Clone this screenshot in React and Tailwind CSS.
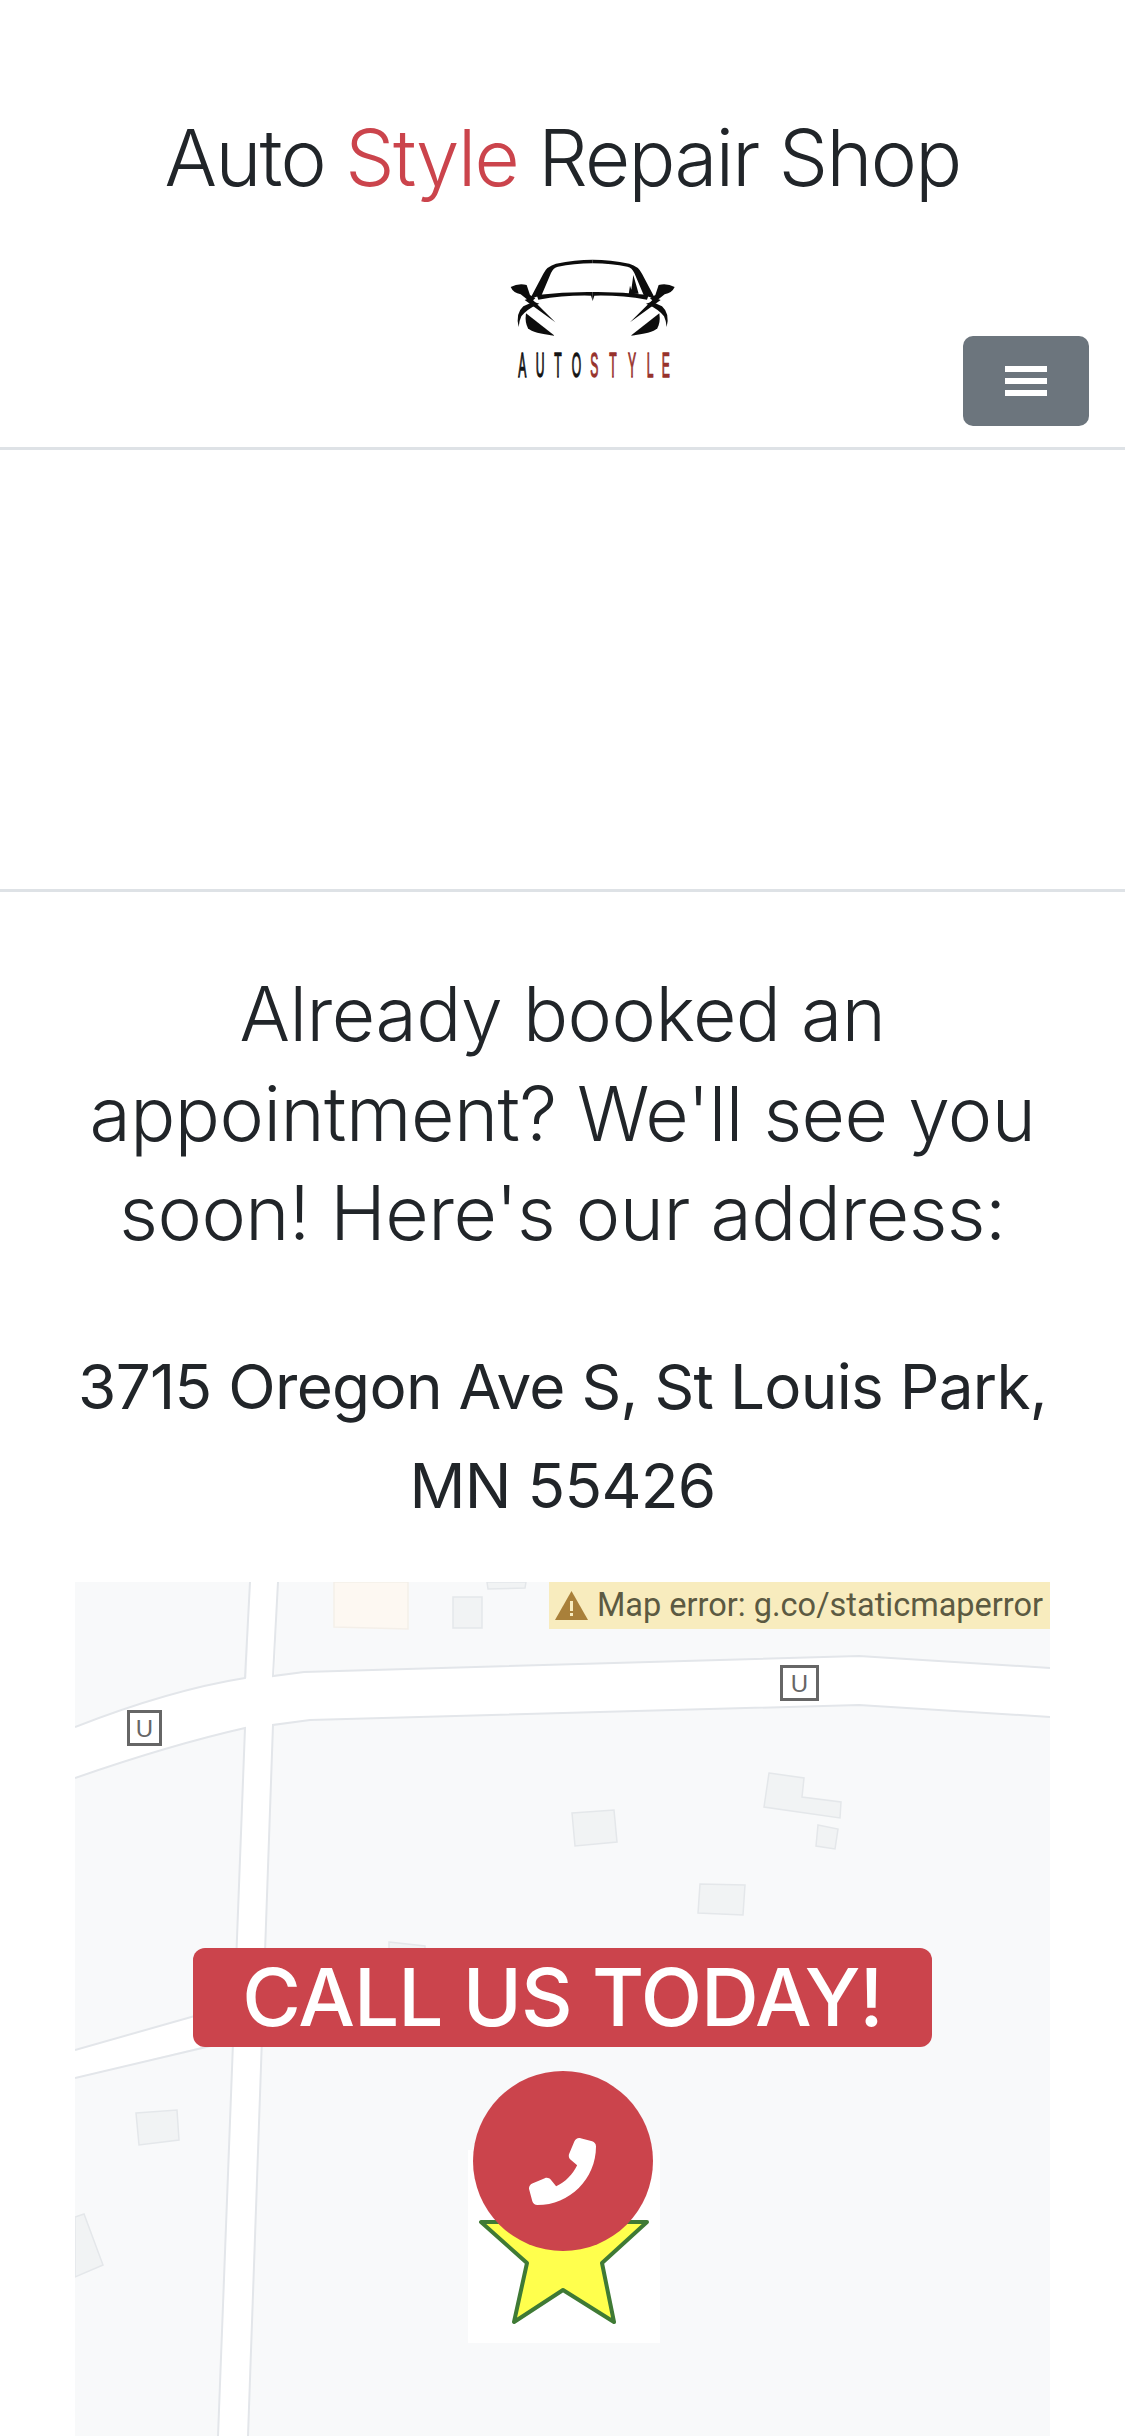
import { FaPhone } from "react-icons/fa6";

const CAR_SIDE = [
  // windshield pillar and half of the roof
  "M120 162 L160 86 Q170 64 198 56 Q255 44 308 44 L308 55 Q250 56 204 65 Q190 68 183 84 L155 150 Z",
  // belt line
  "M140 150 Q225 140 308 141 L308 168 L303 152 Q225 150 145 164 Z",
  // mirror
  "M62 126 Q85 114 110 120 L120 150 L136 160 L122 172 L92 148 Q70 144 62 126 Z",
  // crossing strokes
  "M104 165 L122 158 L196 232 L136 188 Z",
  "M130 170 L148 176 Q110 192 94 214 Q88 226 86 246 Q76 205 100 184 Z",
  // headlamp
  "M108 205 L194 272 Q130 266 114 250 Q104 232 108 205 Z",
];

const LETTERS = [
  ["A", 85, "#111"],
  ["U", 137, "#111"],
  ["T", 193, "#111"],
  ["O", 245, "#111"],
  ["S", 301, "#96302a"],
  ["T", 358, "#96302a"],
  ["Y", 414, "#96302a"],
  ["L", 470, "#96302a"],
  ["E", 515, "#96302a"],
];

function Logo() {
  return (
    <svg viewBox="0 0 600 450" className="w-[200px] h-[150px] shrink-0 opacity-[0.99]">
      {CAR_SIDE.map((d) => (
        <path key={d} d={d} fill="#0a0a0a" />
      ))}
      <g transform="translate(616 0) scale(-1 1)">
        {CAR_SIDE.map((d) => (
          <path key={d} d={d} fill="#0a0a0a" />
        ))}
      </g>
      <path d="M430 90 L446 146 L416 148 L420 122 L424 134 Z" fill="#0a0a0a" />
      {LETTERS.map(([c, x, fill], i) => (
        <text
          key={i}
          transform={`translate(${x} 396) scale(0.34 1)`}
          fontFamily="'Liberation Sans', sans-serif"
          fontSize="107"
          fill={fill}
          stroke={fill}
          strokeWidth="4"
        >
          {c}
        </text>
      ))}
    </svg>
  );
}

const BUILDINGS = [
  "M453 1597 L482 1597 L482 1628 L453 1628 Z",
  "M487 1582 L526 1582 L525 1588 L488 1589 Z",
  "M572 1813 L614 1810 L617 1842 L575 1846 Z",
  "M769 1773 L804 1778 L802 1797 L841 1802 L840 1818 L764 1807 Z",
  "M818 1825 L838 1829 L835 1849 L816 1846 Z",
  "M700 1884 L745 1885 L743 1915 L698 1913 Z",
  "M389 1942 L425 1946 L425 1960 L389 1960 Z",
  "M136 2113 L177 2110 L179 2140 L139 2145 Z",
  "M75 2217 L84 2214 L103 2265 L75 2277 Z",
];

function MapPicture() {
  return (
    <svg viewBox="75 1582 975 854" className="w-full h-full block">
      <rect x="75" y="1582" width="975" height="854" fill="#f8f9fa" />
      <path d="M334 1582 L408 1582 L408 1629 L334 1627 Z" fill="#fdf8f2" stroke="#f4efe9" strokeWidth="1.5" />
      {BUILDINGS.map((d) => (
        <path key={d} d={d} fill="#f1f3f4" stroke="#e4e7ea" strokeWidth="1.5" />
      ))}
      {/* roads */}
      <path d="M250 1582 L278 1582 L273 1725 L248 2436 L218 2436 L245 1728 Z" fill="#fff" />
      <path d="M75 1727 Q170 1690 245 1678 L273 1676 L304 1672 L859 1656 L1050 1668 L1050 1717 L859 1705 L310 1720 L273 1725 L245 1728 Q170 1745 75 1778 Z" fill="#fff" />
      <path d="M75 2050 L250 2000 L250 2035 L75 2078 Z" fill="#fff" />
      <g fill="none" stroke="#e3e6ea" strokeWidth="2">
        <path d="M250 1582 L245 1678 Q170 1690 75 1727" />
        <path d="M278 1582 L273 1676 L304 1672 L859 1656 L1050 1668" />
        <path d="M1050 1717 L859 1705 L310 1720 L273 1725 L248 2436" />
        <path d="M75 1778 Q170 1745 245 1728 L218 2436" />
        <path d="M75 2050 L230 2006" />
        <path d="M75 2078 L215 2045" />
      </g>
      {/* U signs */}
      <g fill="#fff" stroke="#666" strokeWidth="3">
        <rect x="128.5" y="1711.5" width="32" height="33" />
        <rect x="781.5" y="1666.5" width="36" height="33" />
      </g>
      <g fontFamily="'Liberation Sans', sans-serif" fontSize="24" fill="#666" textAnchor="middle">
        <text x="144.5" y="1737">U</text>
        <text x="799.5" y="1692">U</text>
      </g>
      {/* marker */}
      <rect x="468" y="2150" width="192" height="193" fill="#fff" />
      <path
        d="M563 2160 L600 2222 L647 2222 L602 2263 L614 2322 L563 2290 L514 2322 L527 2263 L481 2222 L527 2222 Z"
        fill="#ffff4d"
        stroke="#3f7a35"
        strokeWidth="4"
        strokeLinejoin="round"
      />
    </svg>
  );
}

export default function App() {
  return (
    <div className="relative h-[2436px] overflow-hidden bg-white text-[#212529] font-[Inter,sans-serif] font-light">
      <header className="pt-[109px] h-[450px] border-b-[3px] border-[#dee2e6]">
        <h1 className="text-center text-[78px] leading-[97px] tracking-[-1.7px]">
          Auto <span className="text-[#cb444c]">Style</span> Repair Shop
        </h1>
        <div className="flex justify-between pl-[490px] pr-[36px] mt-[39px]">
          <Logo />
          <button className="mt-[91px] w-[126px] h-[90px] rounded-[10px] bg-[#6c757d] flex flex-col items-center justify-center gap-[6px]">
            <span className="w-[42px] h-[6px] bg-white" />
            <span className="w-[42px] h-[6px] bg-white" />
            <span className="w-[42px] h-[6px] bg-white" />
          </button>
        </div>
      </header>

      <div className="h-[442px] border-b-[3px] border-[#dee2e6]" />

      <main className="px-[75px] text-center">
        <h2 className="mt-[72px] text-[75px] leading-[99.5px] tracking-[-0.5px] -mx-[20px]">
          Already booked an appointment? We'll see you soon! Here's our address:
        </h2>
        <h3 className="mt-[74px] text-[62px] leading-[99.5px] tracking-[-0.7px] font-normal -mx-[20px]">
          3715 Oregon Ave S, St Louis Park, MN 55426
        </h3>
        <div className="relative mt-[46px] h-[854px] overflow-hidden">
          <MapPicture />
          <div className="absolute top-0 right-0 w-[501px] h-[47px] bg-[#f8ecbe] flex items-center gap-[9px] pl-[6px]">
            <svg viewBox="0 0 33 29" className="w-[33px] h-[29px] shrink-0">
              <path d="M16.5 0 L33 29 L0 29 Z" fill="#a9803a" />
              <rect x="15" y="10" width="3" height="10" fill="#f8ecbe" />
              <rect x="15" y="22" width="3" height="3" fill="#f8ecbe" />
            </svg>
            <span className="font-[Roboto,sans-serif] font-normal text-[32.5px] text-[#5c5a42] whitespace-nowrap">
              Map error: g.co/staticmaperror
            </span>
          </div>
        </div>
      </main>

      {/* call button sits over the map */}
      <div className="absolute top-[1948px] left-0 w-[1125px] flex flex-col items-center gap-[24px] font-medium">
        <div className="w-[739px] h-[99px] rounded-[12px] bg-[#cb444c] text-white text-[80px] leading-[97px] tracking-[-1px] text-center whitespace-nowrap">
          CALL US TODAY!
        </div>
        <div className="w-[180px] h-[180px] rounded-full bg-[#cb444c] flex items-center justify-center pt-[20px]">
          <FaPhone className="w-[67px] h-[67px] text-white -scale-x-100" />
        </div>
      </div>
    </div>
  );
}
